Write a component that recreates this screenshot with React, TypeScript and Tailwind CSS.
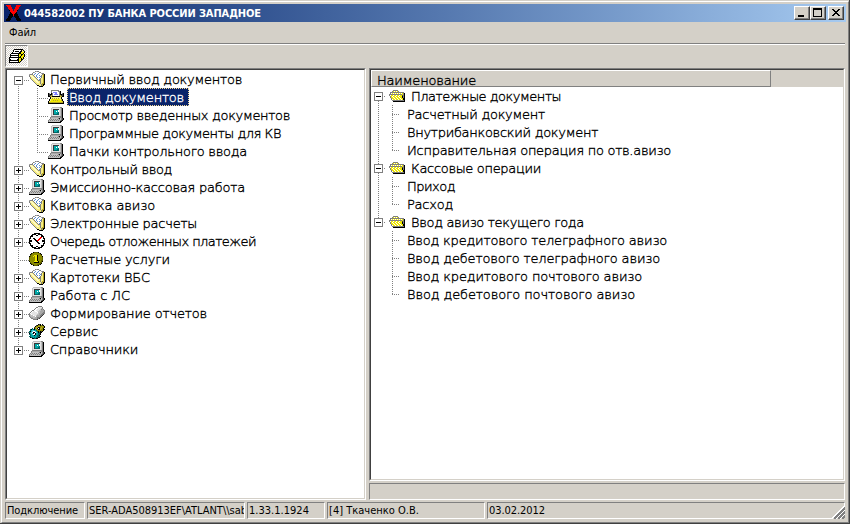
import { useLayoutEffect, useRef } from 'react';
import type { ReactNode } from 'react';

const INK: Record<string, string> = {
  k: '#000000', w: '#ffffff', g: '#808080', G: '#404040', c: '#c0c0c0', y: '#f7ee80',
  Y: '#b8a828', o: '#606000', b: '#5b8fd0', t: '#00a8a8', T: '#006868', d: '#383838',
  r: '#ff0000', l: '#e4e4e4', L: '#fffbc8', p: '#8080ff', q: '#f0e800', a: '#50c8d8', n: '#a8a8a8',
  m: '#8c8c00',
};

const FOLDER_DOCS = [
  '......gngg......',
  '....gnwwwwgg....',
  '...gwwbwwbwwngg.',
  'ngggwbwwbwwwwgYk',
  'gLLygwwbwwbwgyYk',
  'gyLLygwbwwwbgyYk',
  '.gyLLygwbwbwgyYk',
  '.gyyLLygwwwgyyYk',
  '..gyyLLygwbgyyYk',
  '...gyyLLygggyyYk',
  '....gyyLLyygyyYk',
  '.....gyyLLygyyYk',
  '......gyyyygyYYk',
  '.......gyyyygYkk',
  '........kkyygYk.',
  '..........kkkk..',
];

const COMPUTER = [
  '....ccccccccgg..',
  '...cllllllllcgk.',
  '...clddddddlcgk.',
  '...cldttttwlcgk.',
  '...cldttwtwlcgk.',
  '...cldttttTlcgk.',
  '...cldtttTTlcgk.',
  '...cldTTTTTlcgk.',
  '...cllllllllcgk.',
  '...gggggggggggk.',
  '..gnnnnnnnnnggk.',
  '..gcccccccgkcgGk',
  '.gcgcgcgcgcgcgGk',
  'gcgcgcgcgcgcgGk.',
  'gccccccccccckk..',
  'kkkkkkkkkkkkk...',
];

const TYPEWRITER = [
  '...gggggggg.....',
  '...gwwwwwwggk...',
  '...gwppppwwgk...',
  'kg.kgwwppwwgk.gk',
  'kGkkgwppppwgkkGk',
  'kGGYgwwwwwwgYGGk',
  'kkYYkkkkkkkkYYkk',
  '..kyyyyyyyyyyk..',
  '..kyYyYyYyYyyk..',
  '.kyqqqqqqqqqyYk.',
  '.kyqqYqYqYqqqYk.',
  'kyqqqqqqqqqqqqYk',
  'kYYYYYYYYYYYYYYk',
  'kkkkkkkkkkkkkkkk',
];

const CLOCK = [
  '.....kkkkkk.....',
  '...kkkkwwkkkk...',
  '..kkwwwkkwwwkk..',
  '.kkkwwwwwwwwkkk.',
  '.kwwwwwwwwwrrwk.',
  'kkwwkkwwwwrrwwkk',
  'kwwwwkkwwrrwwwwk',
  'kkkwwwkkrrwwwkkk',
  'kkkwwwwkkwwwwkkk',
  'kwwwwwwwkkwwwwwk',
  'kkwwwwwwwkkwwwkk',
  '.kwwwwwwwwwwwwk.',
  '.kkkwwwwwwwwkkk.',
  '..kkwwwkkwwwkk..',
  '...kkkkwwkkkk...',
  '.....kkkkkk.....',
];

const COIN = [
  '....kooook......',
  '..kommmmmmok....',
  '.kommmmmmmmok...',
  '.ommmqqqkmmmo...',
  'kommqmqqkmmmmk..',
  'ommmmmqqkmmmmo..',
  'ommmmmqqkmmmmo..',
  'ommmmmqqkmmmmo..',
  'ommmmmqqkmmmoo..',
  'kmmmmqqqqkmmok..',
  '.ommmkkkkkmoo...',
  '.kommmmmmmook...',
  '..koommmoook....',
  '....kooook......',
];

const PRINTER = [
  '.........gggg...',
  '.......ggwlllg..',
  '......gwwlllcg..',
  '.....gwwlllcgng.',
  '...ggwwlllccnnng',
  '..gwllwwlccnnnng',
  '.gwlllllwccnnngg',
  'gwlllllllcnnnggg',
  'gcwlllllccnnggG.',
  'gcccwllcnnnggG..',
  'gnccccwnnnngG...',
  '.gnnccnngggG....',
  '..ggnnnnggG.....',
  '....ggggG.......',
];

const GEARS = [
  '.........kGk.k..',
  '.......GkmmkmGk.',
  '......kmmYYmmYmk',
  '.....GmYYkkmYmmk',
  '...T.kmYk.kYYmk.',
  '.TktTktmYkkYmmkk',
  '.TtaattTmmmmmmk.',
  'TktawwatTkmkGk..',
  'TtawkkwatkTkk...',
  'ktatk.kttTTk....',
  'TTtaw.kttTTk....',
  '.TtttkttTTk.....',
  'TTttttttTTTk....',
  '.kTTtTtTTkk.....',
  '...kkTTkk.......',
];

const FOLDER = [
  '....ggggg.......',
  '...gqwqwqg......',
  '.gggggggggggggg.',
  '.gwqwqwqwqwqwqgk',
  'gggggggggggggqgk',
  'gwqqwqqwqqwqqGgk',
  '.gqwqqwqqwqqqkgk',
  '.gqqwqqwqqwqqkgk',
  '..gqqwqqwqqwqqkk',
  '..gwqqwqqwqqwqkk',
  '...ggggggggggggk',
  '....kkkkkkkkkkkk',
];

const PRINT_STACK = [
  '.....kkkkkkkkk..',
  '....kwwwwwwwkyk.',
  '....kwkkkkwkkyyk',
  '...kwwwwwwkkqqqk',
  '..kkkkkkkkkkqqk.',
  '.kwwwwwwwkqqkkqk',
  '.kkkkkkkkkqqkqqk',
  '.kwwwwwwwkqkqqqk',
  'kkkkkkkkkkkkqqk.',
  'kwwwwwwwwkqqkqk.',
  'kkwwwwwwkkqqkk..',
  'kkkkkkkkkkqqk...',
  'kwwwwwwwwkqk....',
  'kkkkkkkkkkk.....',
];

const LOGO = [
  'rrrrr.....rrrrr.',
  '.rrrr.....rrrr..',
  '..rrrr...rrrr...',
  '..rrrr...rrrr...',
  '...rrrr.rrrr....',
  '...krrr.rrrk....',
  '....rrrrrrr.....',
  '....krrrrrk.....',
  '....kkrrrkk.....',
  '...kkkkrkkkk....',
  '...kkkkrkkkk....',
  '..kkkkk.kkkkk...',
  '..kkkk...kkkk...',
  '.kkkk.....kkkk..',
  'kkkkk.....kkkkk.',
  'kkkk.......kkkk.',
];

function Pixels({ art }: { art: string[] }) {
  const w = Math.max(...art.map((r) => r.length));
  return (
    <svg width={w} height={art.length} shapeRendering="crispEdges" className="block shrink-0">
      {art.flatMap((row, y) =>
        [...row].map((ch, x) =>
          ch === '.' ? null : <rect key={`${x}-${y}`} x={x} y={y} width="1" height="1" fill={INK[ch]} />,
        ),
      )}
    </svg>
  );
}

/* A single line of text spread evenly over the given width. */
function Line({ w, children, className = '' }: { w: number; children: string; className?: string }) {
  const ref = useRef<HTMLSpanElement>(null);
  useLayoutEffect(() => {
    const el = ref.current;
    if (!el) return;
    el.style.letterSpacing = '0px';
    const natural = el.getBoundingClientRect().width;
    el.style.letterSpacing = `${(w - natural) / children.length}px`;
  }, [w, children]);
  return (
    <span ref={ref} className={`block w-max shrink-0 whitespace-pre ${className}`}>
      {children}
    </span>
  );
}

type GuideProps = { w: number; x: number; mid: number; up?: boolean; down?: boolean; across?: number; box?: 'plus' | 'minus' };

function Guide({ w, x, mid, up, down, across, box }: GuideProps) {
  const c = x + 0.5;
  const m = mid + 0.5;
  return (
    <svg width={w} height="18" shapeRendering="crispEdges" className="block shrink-0">
      <g stroke="#808080" strokeDasharray="1 1">
        {up && <line x1={c} x2={c} y1="0" y2={mid} />}
        {down && <line x1={c} x2={c} y1={mid % 2 ? mid + 1 : mid} y2="18" />}
        {across ? <line x1={x} x2={across} y1={m} y2={m} /> : null}
      </g>
      {box && (
        <>
          <rect x={x - 3.5} y={mid - 3.5} width="8" height="8" fill="#fff" stroke="#808080" />
          <rect x={x - 2} y={mid} width="5" height="1" fill="#000" />
          {box === 'plus' && <rect x={x} y={mid - 2} width="1" height="5" fill="#000" />}
        </>
      )}
    </svg>
  );
}

type Node = { t: string; w: number; icon?: string[]; level?: 1; box?: 'plus' | 'minus'; last?: boolean; sel?: boolean };

const LEFT: Node[] = [
  { t: 'Первичный ввод документов', w: 192, icon: FOLDER_DOCS, box: 'minus' },
  { t: 'Ввод документов', w: 115, icon: TYPEWRITER, level: 1, sel: true },
  { t: 'Просмотр введенных документов', w: 221, icon: COMPUTER, level: 1 },
  { t: 'Программные документы для КВ', w: 212, icon: COMPUTER, level: 1 },
  { t: 'Пачки контрольного ввода', w: 178, icon: COMPUTER, level: 1, last: true },
  { t: 'Контрольный ввод', w: 122, icon: FOLDER_DOCS, box: 'plus' },
  { t: 'Эмиссионно-кассовая работа', w: 195, icon: COMPUTER, box: 'plus' },
  { t: 'Квитовка авизо', w: 105, icon: FOLDER_DOCS, box: 'plus' },
  { t: 'Электронные расчеты', w: 147, icon: FOLDER_DOCS, box: 'plus' },
  { t: 'Очередь отложенных платежей', w: 206, icon: CLOCK, box: 'plus' },
  { t: 'Расчетные услуги', w: 120, icon: COIN },
  { t: 'Картотеки ВБС', w: 100, icon: FOLDER_DOCS, box: 'plus' },
  { t: 'Работа с ЛС', w: 80, icon: COMPUTER, box: 'plus' },
  { t: 'Формирование отчетов', w: 157, icon: PRINTER, box: 'plus' },
  { t: 'Сервис', w: 48, icon: GEARS, box: 'plus' },
  { t: 'Справочники', w: 88, icon: COMPUTER, box: 'plus', last: true },
];

const RIGHT: Node[] = [
  { t: 'Платежные документы', w: 150, box: 'minus' },
  { t: 'Расчетный документ', w: 138, level: 1 },
  { t: 'Внутрибанковский документ', w: 191, level: 1 },
  { t: 'Исправительная операция по отв.авизо', w: 264, level: 1, last: true },
  { t: 'Кассовые операции', w: 130, box: 'minus' },
  { t: 'Приход', w: 48, level: 1 },
  { t: 'Расход', w: 46, level: 1, last: true },
  { t: 'Ввод авизо текущего года', w: 173, box: 'minus', last: true },
  { t: 'Ввод кредитового телеграфного авизо', w: 260, level: 1 },
  { t: 'Ввод дебетового телеграфного авизо', w: 253, level: 1 },
  { t: 'Ввод кредитового почтового авизо', w: 235, level: 1 },
  { t: 'Ввод дебетового почтового авизо', w: 228, level: 1, last: true },
];

function LeftRow({ n, first }: { n: Node; first: boolean }) {
  return (
    <div className="flex h-[18px] items-center">
      {n.level ? (
        <>
          <Guide w={21} x={11} mid={10} up down />
          <Guide w={20} x={9} mid={10} up down={!n.last} across={20} />
        </>
      ) : (
        <Guide w={22} x={11} mid={10} up={!first} down={!n.last} across={22} box={n.box} />
      )}
      <div className={`flex h-[18px] shrink-0 items-center ${n.level ? 'w-[19px]' : 'w-[17px]'}`}>
        <Pixels art={n.icon!} />
      </div>
      {n.sel ? (
        <div className="flex h-[18px] w-[122px] items-center border border-dotted border-[#f5db95] bg-[#0a246a] pl-px text-white">
          <Line w={n.w}>{n.t}</Line>
        </div>
      ) : (
        <Line w={n.w} className={n.level ? 'ml-[2px]' : 'ml-[4px]'}>{n.t}</Line>
      )}
    </div>
  );
}

function RightRow({ n, first, tail }: { n: Node; first: boolean; tail: boolean }) {
  return (
    <div className="flex h-[18px] items-center">
      {n.level ? (
        <>
          <Guide w={14} x={7} mid={9} up={!tail} down={!tail} />
          <Guide w={22} x={7} mid={9} up down={!n.last} across={14} />
        </>
      ) : (
        <>
          <Guide w={18} x={7} mid={9} up={!first} down={!n.last} across={14} box={n.box} />
          <div className="mr-[6px]">
            <Pixels art={FOLDER} />
          </div>
        </>
      )}
      <Line w={n.w}>{n.t}</Line>
    </div>
  );
}

function WinButton({ children }: { children: ReactNode }) {
  return (
    <div className="h-[14px] w-4 border border-t-white border-r-[#404040] border-b-[#404040] border-l-white bg-[#d4d0c8]">
      <div className="h-full border-r border-b border-[#808080]">
        <svg width="13" height="11" shapeRendering="crispEdges" className="block">
          {children}
        </svg>
      </div>
    </div>
  );
}

function StatusCell({ className, w, children }: { className: string; w: number; children: string }) {
  return (
    <div
      className={`flex h-[17px] items-center overflow-hidden border border-t-[#808080] border-r-white border-b-white border-l-[#808080] pl-px ${className}`}
    >
      <Line w={w}>{children}</Line>
    </div>
  );
}

const SUNKEN = 'border border-t-[#808080] border-r-white border-b-white border-l-[#808080]';
const SUNKEN_INNER = 'border border-t-[#404040] border-r-[#d4d0c8] border-b-[#d4d0c8] border-l-[#404040]';
const TREE_FONT = "font-['DejaVu_Sans',sans-serif] font-extralight text-[13px] [-webkit-text-stroke:0.35px_currentColor]";

export default function App() {
  return (
    <div className="h-[524px] w-[850px] overflow-hidden border-r border-b border-[#404040] bg-[#d4d0c8] pt-px pl-px font-['DejaVu_Sans_Condensed','DejaVu_Sans',sans-serif] text-[11px] leading-none text-black">
      <div className="flex h-full flex-col border border-t-white border-r-[#808080] border-b-[#808080] border-l-white px-[2px] pt-[2px]">
        <header className="flex h-[18px] shrink-0 items-center bg-linear-to-r from-[#0a246a] to-[#a6caf0] pr-[2px] pl-[2px]">
          <Pixels art={LOGO} />
          <Line w={237} className="ml-[2px] text-[11px] font-bold text-white">
            044582002 ПУ БАНКА РОССИИ ЗАПАДНОЕ
          </Line>
          <div className="ml-auto flex">
            <WinButton>
              <rect x="3" y="8" width="6" height="2" />
            </WinButton>
            <WinButton>
              <path d="M2 1h9v9H2z M3 3v6h7V3z" fillRule="evenodd" />
            </WinButton>
            <div className="ml-[2px]">
              <WinButton>
                <path d="M3 2h2v1h1v1h2v-1h1v-1h2v1h-1v1h-1v1h-1v1h1v1h1v1h1v1h-2v-1h-1v-1h-2v1h-1v1h-2v-1h1v-1h1v-1h1v-1h-1v-1h-1v-1h-1z" />
              </WinButton>
            </div>
          </div>
        </header>

        <nav className="flex h-[21px] shrink-0 items-center pl-[5px]">
          <Line w={27}>Файл</Line>
        </nav>
        <div className="mx-px h-[2px] shrink-0 border-t border-b border-t-[#808080] border-b-white" />

        <div className="flex h-[23px] shrink-0 pl-px">
          <div className={`flex h-[22px] w-[23px] items-center justify-center bg-[repeating-conic-gradient(#ffffff_0_25%,#d4d0c8_0_50%)] bg-[size:2px_2px] ${SUNKEN}`}>
            <Pixels art={PRINT_STACK} />
          </div>
        </div>

        <main className="flex h-[432px] shrink-0 px-px">
          <section className={`w-[361px] ${SUNKEN}`}>
            <div className={`h-full bg-white ${TREE_FONT} ${SUNKEN_INNER}`}>
              {LEFT.map((n, i) => (
                <LeftRow key={n.t} n={n} first={i === 0} />
              ))}
            </div>
          </section>

          <section className="ml-[3px] flex w-[476px] flex-col gap-[2px]">
            <div className={`h-[413px] ${SUNKEN}`}>
              <div className={`h-full bg-white ${TREE_FONT} ${SUNKEN_INNER}`}>
                <div className="flex h-[17px] bg-[#d4d0c8]">
                  <div className="flex w-[400px] items-center border border-t-white border-r-[#808080] border-b-[#808080] border-l-white pt-[3px] pl-[5px]">
                    <Line w={99}>Наименование</Line>
                  </div>
                </div>
                {RIGHT.map((n, i) => (
                  <RightRow key={n.t} n={n} first={i === 0} tail={i > 7} />
                ))}
              </div>
            </div>
            <div className={`h-[17px] ${SUNKEN}`} />
          </section>
        </main>

        <footer className="mt-[2px] flex h-[17px] shrink-0 gap-[2px] px-px">
          <StatusCell className="w-[80px]" w={71}>Подключение</StatusCell>
          <StatusCell className="w-[158px]" w={158}>{'SER-ADA508913EF\\ATLANT\\\\sab'}</StatusCell>
          <StatusCell className="w-[78px]" w={60}>1.33.1.1924</StatusCell>
          <StatusCell className="w-[158px]" w={90}>[4] Ткаченко О.В.</StatusCell>
          <div className={`flex flex-1 items-center justify-between pl-px ${SUNKEN}`}>
            <Line w={56}>03.02.2012</Line>
            <svg width="13" height="13" className="-mr-px -mb-[3px] block" shapeRendering="crispEdges">
              <path d="M0 13L13 0V13z" fill="#d4d0c8" />
              <path d="M0 12.5L12.5 0M4 12.5L12.5 4M8 12.5L12.5 8" stroke="#fff" />
              <path d="M2 13L13 2M6 13L13 6M10 13L13 10" stroke="#808080" strokeWidth="1.6" />
            </svg>
          </div>
        </footer>
      </div>
    </div>
  );
}
